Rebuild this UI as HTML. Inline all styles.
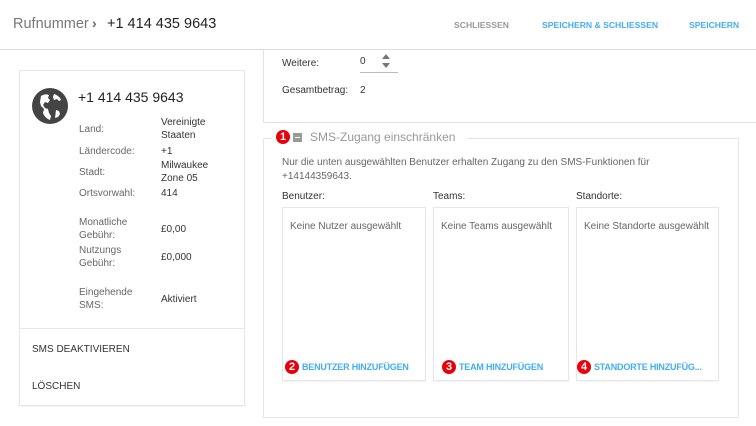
<!DOCTYPE html>
<html><head><meta charset="utf-8"><style>
*{box-sizing:border-box;margin:0;padding:0}
body{width:756px;height:426px;overflow:hidden;background:#fff;font-family:"Liberation Sans",Arial,sans-serif;position:relative;color:#333}
.a{position:absolute;white-space:nowrap}
.lbl{color:#666;font-size:10px;line-height:13px}
.val{color:#333;font-size:10px;line-height:13px}
.box{position:absolute;border:1px solid #e6e6e6;box-shadow:0 1px 1px rgba(0,0,0,.05)}
.badge{position:absolute;width:14px;height:14px;border-radius:7px;background:#e8000b;color:#fff;font-weight:bold;font-size:11px;line-height:14px;text-align:center}
.link{color:#42aef0;font-size:9px;font-weight:bold;letter-spacing:-.2px}
.btn{font-size:8.6px;font-weight:bold}
</style></head><body>
<div class="a" style="left:13px;top:16px;font-size:14.5px;color:#777">Rufnummer</div>
<div class="a" style="left:92px;top:15px;font-size:14px;color:#666;font-weight:bold">›</div>
<div class="a" style="left:107px;top:16px;font-size:14.5px;color:#222">+1 414 435 9643</div>
<div class="a btn" style="left:454px;top:20px;color:#999">SCHLIESSEN</div>
<div class="a btn" style="left:542px;top:20px;color:#42aef0">SPEICHERN &amp; SCHLIESSEN</div>
<div class="a btn" style="left:689px;top:20px;color:#42aef0">SPEICHERN</div>
<div class="a" style="left:0;top:49px;width:756px;height:1px;background:#ddd"></div>

<div class="box" style="left:19px;top:70px;width:226px;height:336px"></div>
<svg class="a" style="left:32px;top:88px" width="36" height="36" viewBox="0 0 36 36"><circle cx="18" cy="18" r="18" fill="#444"/><path d="M9 8c3-2 6-2 8-1l-1 3 2 2-2 3-3-1-2 3 2 3 3 1 1 4 2 3-1 4c-3-1-6-4-7-7l1-4-3-3-1-4z M22 6c3 1 6 3 7 6l-2 1-2-2-3 1-1-3z M24 22l3 1 1 3-2 3-3 1z" fill="#fff"/></svg>
<div class="a" style="left:78px;top:89px;font-size:14px;color:#222">+1 414 435 9643</div>
<div class="a lbl" style="left:79px;top:123px">Land:</div>
<div class="a val" style="left:161px;top:116px">Vereinigte<br>Staaten</div>
<div class="a lbl" style="left:79px;top:145px">Ländercode:</div>
<div class="a val" style="left:161px;top:145px">+1</div>
<div class="a lbl" style="left:79px;top:166px">Stadt:</div>
<div class="a val" style="left:161px;top:159px">Milwaukee<br>Zone 05</div>
<div class="a lbl" style="left:79px;top:187px">Ortsvorwahl:</div>
<div class="a val" style="left:161px;top:187px">414</div>
<div class="a lbl" style="left:79px;top:216px">Monatliche<br>Gebühr:</div>
<div class="a val" style="left:161px;top:223px">£0,00</div>
<div class="a lbl" style="left:79px;top:244px">Nutzungs<br>Gebühr:</div>
<div class="a val" style="left:161px;top:251px">£0,000</div>
<div class="a lbl" style="left:79px;top:286px">Eingehende<br>SMS:</div>
<div class="a val" style="left:161px;top:293px">Aktiviert</div>
<div class="a" style="left:20px;top:328px;width:224px;height:1px;background:#e6e6e6"></div>
<div class="a val" style="left:32px;top:343px">SMS DEAKTIVIEREN</div>
<div class="a val" style="left:32px;top:380px">LÖSCHEN</div>

<div class="a" style="left:263px;top:50px;width:500px;height:73px;border:1px solid #e3e3e3;border-top:none"></div>
<div class="a val" style="left:282px;top:57px">Weitere:</div>
<div class="a val" style="left:360px;top:55px">0</div>
<div class="a" style="left:382px;top:54px;width:0;height:0;border-left:4px solid transparent;border-right:4px solid transparent;border-bottom:5px solid #777"></div>
<div class="a" style="left:382px;top:63px;width:0;height:0;border-left:4px solid transparent;border-right:4px solid transparent;border-top:5px solid #777"></div>
<div class="a" style="left:360px;top:72px;width:38px;height:1px;background:#bbb"></div>
<div class="a val" style="left:282px;top:84px">Gesamtbetrag:</div>
<div class="a val" style="left:360px;top:84px">2</div>

<div class="a" style="left:263px;top:138px;width:476px;height:280px;border:1px solid #e6e6e6"></div>
<div class="a" style="left:272px;top:130px;width:195px;height:16px;background:#fff"></div>
<div class="badge" style="left:276px;top:130px">1</div>
<div class="a" style="left:293px;top:133px;width:9px;height:9px;background:#999"></div>
<div class="a" style="left:295px;top:137px;width:5px;height:1px;background:#fff"></div>
<div class="a" style="left:310px;top:130px;font-size:12px;color:#999">SMS-Zugang einschränken</div>
<div class="a lbl" style="left:282px;top:156px;line-height:14px">Nur die unten ausgewählten Benutzer erhalten Zugang zu den SMS-Funktionen für<br>+14144359643.</div>
<div class="a val" style="left:282px;top:190px">Benutzer:</div>
<div class="a val" style="left:433px;top:190px">Teams:</div>
<div class="a val" style="left:576px;top:190px">Standorte:</div>
<div class="box" style="left:282px;top:207px;width:144px;height:174px"></div>
<div class="box" style="left:433px;top:207px;width:136px;height:174px"></div>
<div class="box" style="left:576px;top:207px;width:143px;height:174px"></div>
<div class="a lbl" style="left:290px;top:220px">Keine Nutzer ausgewählt</div>
<div class="a lbl" style="left:441px;top:220px">Keine Teams ausgewählt</div>
<div class="a lbl" style="left:584px;top:220px">Keine Standorte ausgewählt</div>
<div class="badge" style="left:285px;top:360px">2</div>
<div class="a link" style="left:302px;top:362px">BENUTZER HINZUFÜGEN</div>
<div class="badge" style="left:442px;top:360px">3</div>
<div class="a link" style="left:459px;top:362px">TEAM HINZUFÜGEN</div>
<div class="badge" style="left:577px;top:360px">4</div>
<div class="a link" style="left:594px;top:362px">STANDORTE HINZUFÜG...</div>
</body></html>
